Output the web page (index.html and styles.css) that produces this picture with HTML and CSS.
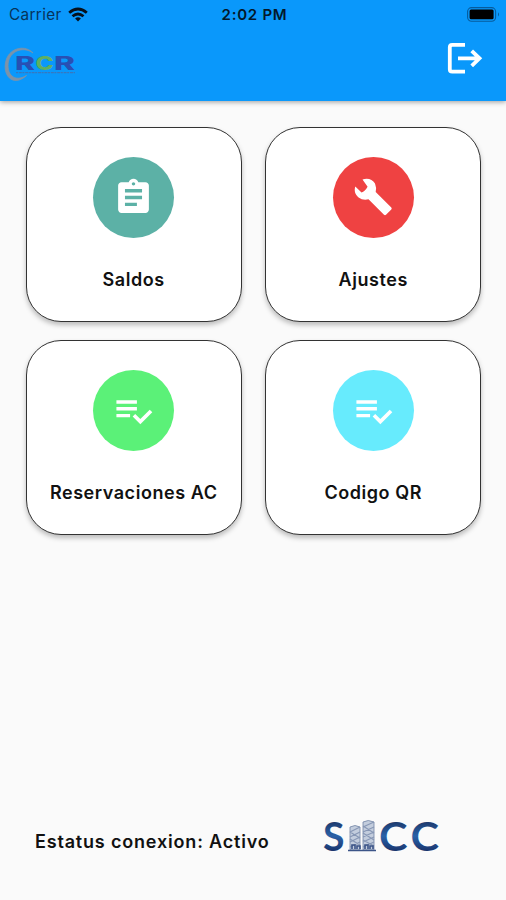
FILE: index.html
```html
<!DOCTYPE html>
<html lang="es">
<head>
<meta charset="utf-8">
<title>Inicio</title>
<link rel="stylesheet" href="styles.css">
</head>
<body>
<header class="header">
  <div class="status">
    <div class="carrier"><span>Carrier</span>
      <svg class="wifi" viewBox="0 0 20 15" fill="none" stroke="#06111c" stroke-width="2.8"><path d="M1.2 5.8Q10-1.8 18.8 5.8M4.5 9.3Q10 4.7 15.5 9.3"/><path d="M10 14.4 7.1 11.5Q10 9.2 12.9 11.5Z" fill="#06111c" stroke="none"/></svg>
    </div>
    <div class="time">2:02 PM</div>
    <svg class="battery" viewBox="0 0 33 15"><rect x=".6" y=".6" width="28" height="13.6" rx="4" fill="none" stroke="#075b9c" stroke-width="1.1"/><rect x="2.6" y="2.6" width="24" height="9.6" rx="1.5" fill="#000"/><path d="M31 5.2q2 2.2 0 4.4z" fill="#075b9c"/></svg>
  </div>
  <div class="toolbar">
    <svg class="rcr" viewBox="0 0 80 40">
      <path d="M33 7C26-1 11 1 6.500 13C1 29 13 42 26.500 29.500C14 37 6 28 8.500 15C12 3 25 1 33 7z" fill="#7d93a8" stroke="#7d93a8" stroke-width=".8"/>
      <g class="rcr-text"><text x="15" y="24" textLength="20" lengthAdjust="spacingAndGlyphs" fill="#2850b4">R</text><text x="35.500" y="24" textLength="18" lengthAdjust="spacingAndGlyphs" fill="#5eaf62">C</text><text x="54" y="24" textLength="21" lengthAdjust="spacingAndGlyphs" fill="#2850b4">R</text></g>
      <path d="M16 26.700H75" stroke="#3977bd" stroke-width="1.3" stroke-dasharray="2 .8 3 .6"/>
    </svg>
    <svg class="logout" viewBox="0 0 36 34" fill="none" stroke="#fff" stroke-width="3.8"><path d="M18 2.800H5.200Q2.800 2.800 2.800 5.200V27.200Q2.800 29.600 5.200 29.600H18M11 16.300H33M24.700 8.800 32.500 16.300 24.700 23.800"/></svg>
  </div>
</header>
<main class="grid">
  <section class="card"><div class="circle teal"><svg viewBox="0 0 24 24"><path d="M19 3h-4.180C14.400 1.840 13.300 1 12 1s-2.400.84-2.820 2H5c-1.100 0-2 .9-2 2v14c0 1.100.9 2 2 2h14c1.100 0 2-.9 2-2V5c0-1.100-.9-2-2-2zm-7 0c.55 0 1 .45 1 1s-.45 1-1 1-1-.45-1-1 .45-1 1-1zm2 14H7v-2h7v2zm3-4H7v-2h10v2zm0-4H7V7h10v2z"/></svg></div><h2>Saldos</h2></section>
  <section class="card"><div class="circle red"><svg viewBox="0 0 41 41"><path d="M9.500 2.600C14 .6 19.500 2 22 6.500Q23.700 10.500 22.700 15L38.300 30.600Q39.200 31.500 38.300 32.400L33 37.700Q32 38.600 31 37.700L15.500 22.300Q9.800 23.600 5.600 20.500C2 17.500 1 13.500 2.300 9.500L8.500 15.500Q12 14.500 14.600 9.800Z"/></svg></div><h2>Ajustes</h2></section>
  <section class="card"><div class="circle green"><svg viewBox="0 0 24 24"><path d="M14 10H2v2h12v-2zm0-4H2v2h12V6zM2 16h8v-2H2v2zm19.500-4.500L23 13l-6.990 7-4.510-4.500L13 14l3.010 3 5.490-5.500z"/></svg></div><h2>Reservaciones AC</h2></section>
  <section class="card"><div class="circle cyan"><svg viewBox="0 0 24 24"><path d="M14 10H2v2h12v-2zm0-4H2v2h12V6zM2 16h8v-2H2v2zm19.500-4.500L23 13l-6.990 7-4.510-4.500L13 14l3.010 3 5.490-5.500z"/></svg></div><h2>Codigo QR</h2></section>
</main>
<footer class="footer">
  <p>Estatus conexion: Activo</p>
  <svg class="sicc" viewBox="0 -14 120 62">
    <defs><linearGradient id="ink" x1="0" y1="0" x2="0" y2="1"><stop offset=".1" stop-color="#172b58"/><stop offset=".5" stop-color="#2b62a8"/><stop offset=".85" stop-color="#172f66"/></linearGradient></defs>
    <g class="sicc-text" fill="url(#ink)"><text x="1" y="32" textLength="21.500" lengthAdjust="spacingAndGlyphs">S</text><text x="57" y="32" textLength="28.500" lengthAdjust="spacingAndGlyphs">C</text><text x="88.500" y="32" textLength="28.500" lengthAdjust="spacingAndGlyphs">C</text></g>
    <path d="M28 8q5-3 10 0V31H28zM41 3q5-3 11 0V31H41z" fill="#c3cddd" stroke="#7184a5" stroke-width=".8"/>
    <path d="M28 13 38 8M28 18 38 13M28 23 38 18M28 28 38 23M41 8 52 3M41 13 52 8M41 18 52 13M41 23 52 18M41 28 52 23M28 13l10 6M28 20l10 6M41 7l11 7M41 14l11 7M41 21l11 6" stroke="#8797b5" stroke-width="1.1"/>
    <path d="M26 31.500H54M30 30v-4h3v4M35 30v-3h3v3M43 30v-4h3v4M48 30v-3h3v3" fill="none" stroke="#3c5488" stroke-width="1.6"/>
  </svg>
</footer>
</body>
</html>
```
FILE: styles.css
```css
* { box-sizing: border-box; }
body { margin: 0; height: 900px; display: flex; flex-direction: column; overflow: hidden; background: #fafafa; color: #111; font-family: Inter, "Liberation Sans", sans-serif; }
.header { height: 101px; flex: none; background: #0a98fb; box-shadow: 0 1px 5px rgba(0,0,0,.38); }
.status { height: 28px; display: grid; grid-template-columns: 1fr auto 1fr; align-items: center; padding: 0 6px 0 9px; }
.carrier { display: flex; align-items: center; gap: 6px; font-size: 15.3px; letter-spacing: .35px; color: #06335a; }
.wifi { width: 20px; height: 15px; }
.time { font-size: 15px; font-weight: 600; letter-spacing: .75px; color: #03182b; }
.battery { width: 33px; height: 15px; justify-self: end; }
.toolbar { height: 73px; display: flex; justify-content: space-between; padding: 14px 23px 0 0; }
.rcr { width: 80px; height: 40px; margin-top: 4px; }
.rcr-text { font: 800 18.5px Inter, sans-serif; }
.logout { width: 36px; height: 34px; }
.grid { display: grid; grid-template-columns: 216px 216px; grid-auto-rows: 195px; gap: 18px 23.5px; padding: 26px 0 0 25.7px; }
.card { display: flex; flex-direction: column; align-items: center; padding-top: 28.5px; background: #fff; border: 1.4px solid #333; border-radius: 35px; box-shadow: 0 3px 5px rgba(0,0,0,.25); }
.circle { width: 81px; height: 81px; flex: none; display: grid; place-items: center; border-radius: 50%; }
.circle svg { width: 41px; height: 41px; fill: #fff; }
.teal { background: #5cb1a6; }
.red { background: #ef4242; }
.green { background: #5bf178; }
.cyan { background: #67ebfd; }
h2 { margin: 30px 0 0; font-size: 18px; line-height: 24px; font-weight: 600; letter-spacing: .55px; white-space: nowrap; }
.footer { margin-top: 267px; display: flex; align-items: flex-start; padding-left: 35px; }
.footer p { width: 287px; margin: 28px 0 0; font-size: 18px; line-height: 24px; font-weight: 600; letter-spacing: .82px; white-space: nowrap; }
.sicc { width: 120px; height: 62px; margin-top: 3px; }
.sicc-text { font: 700 40px Lato, sans-serif; }
```
